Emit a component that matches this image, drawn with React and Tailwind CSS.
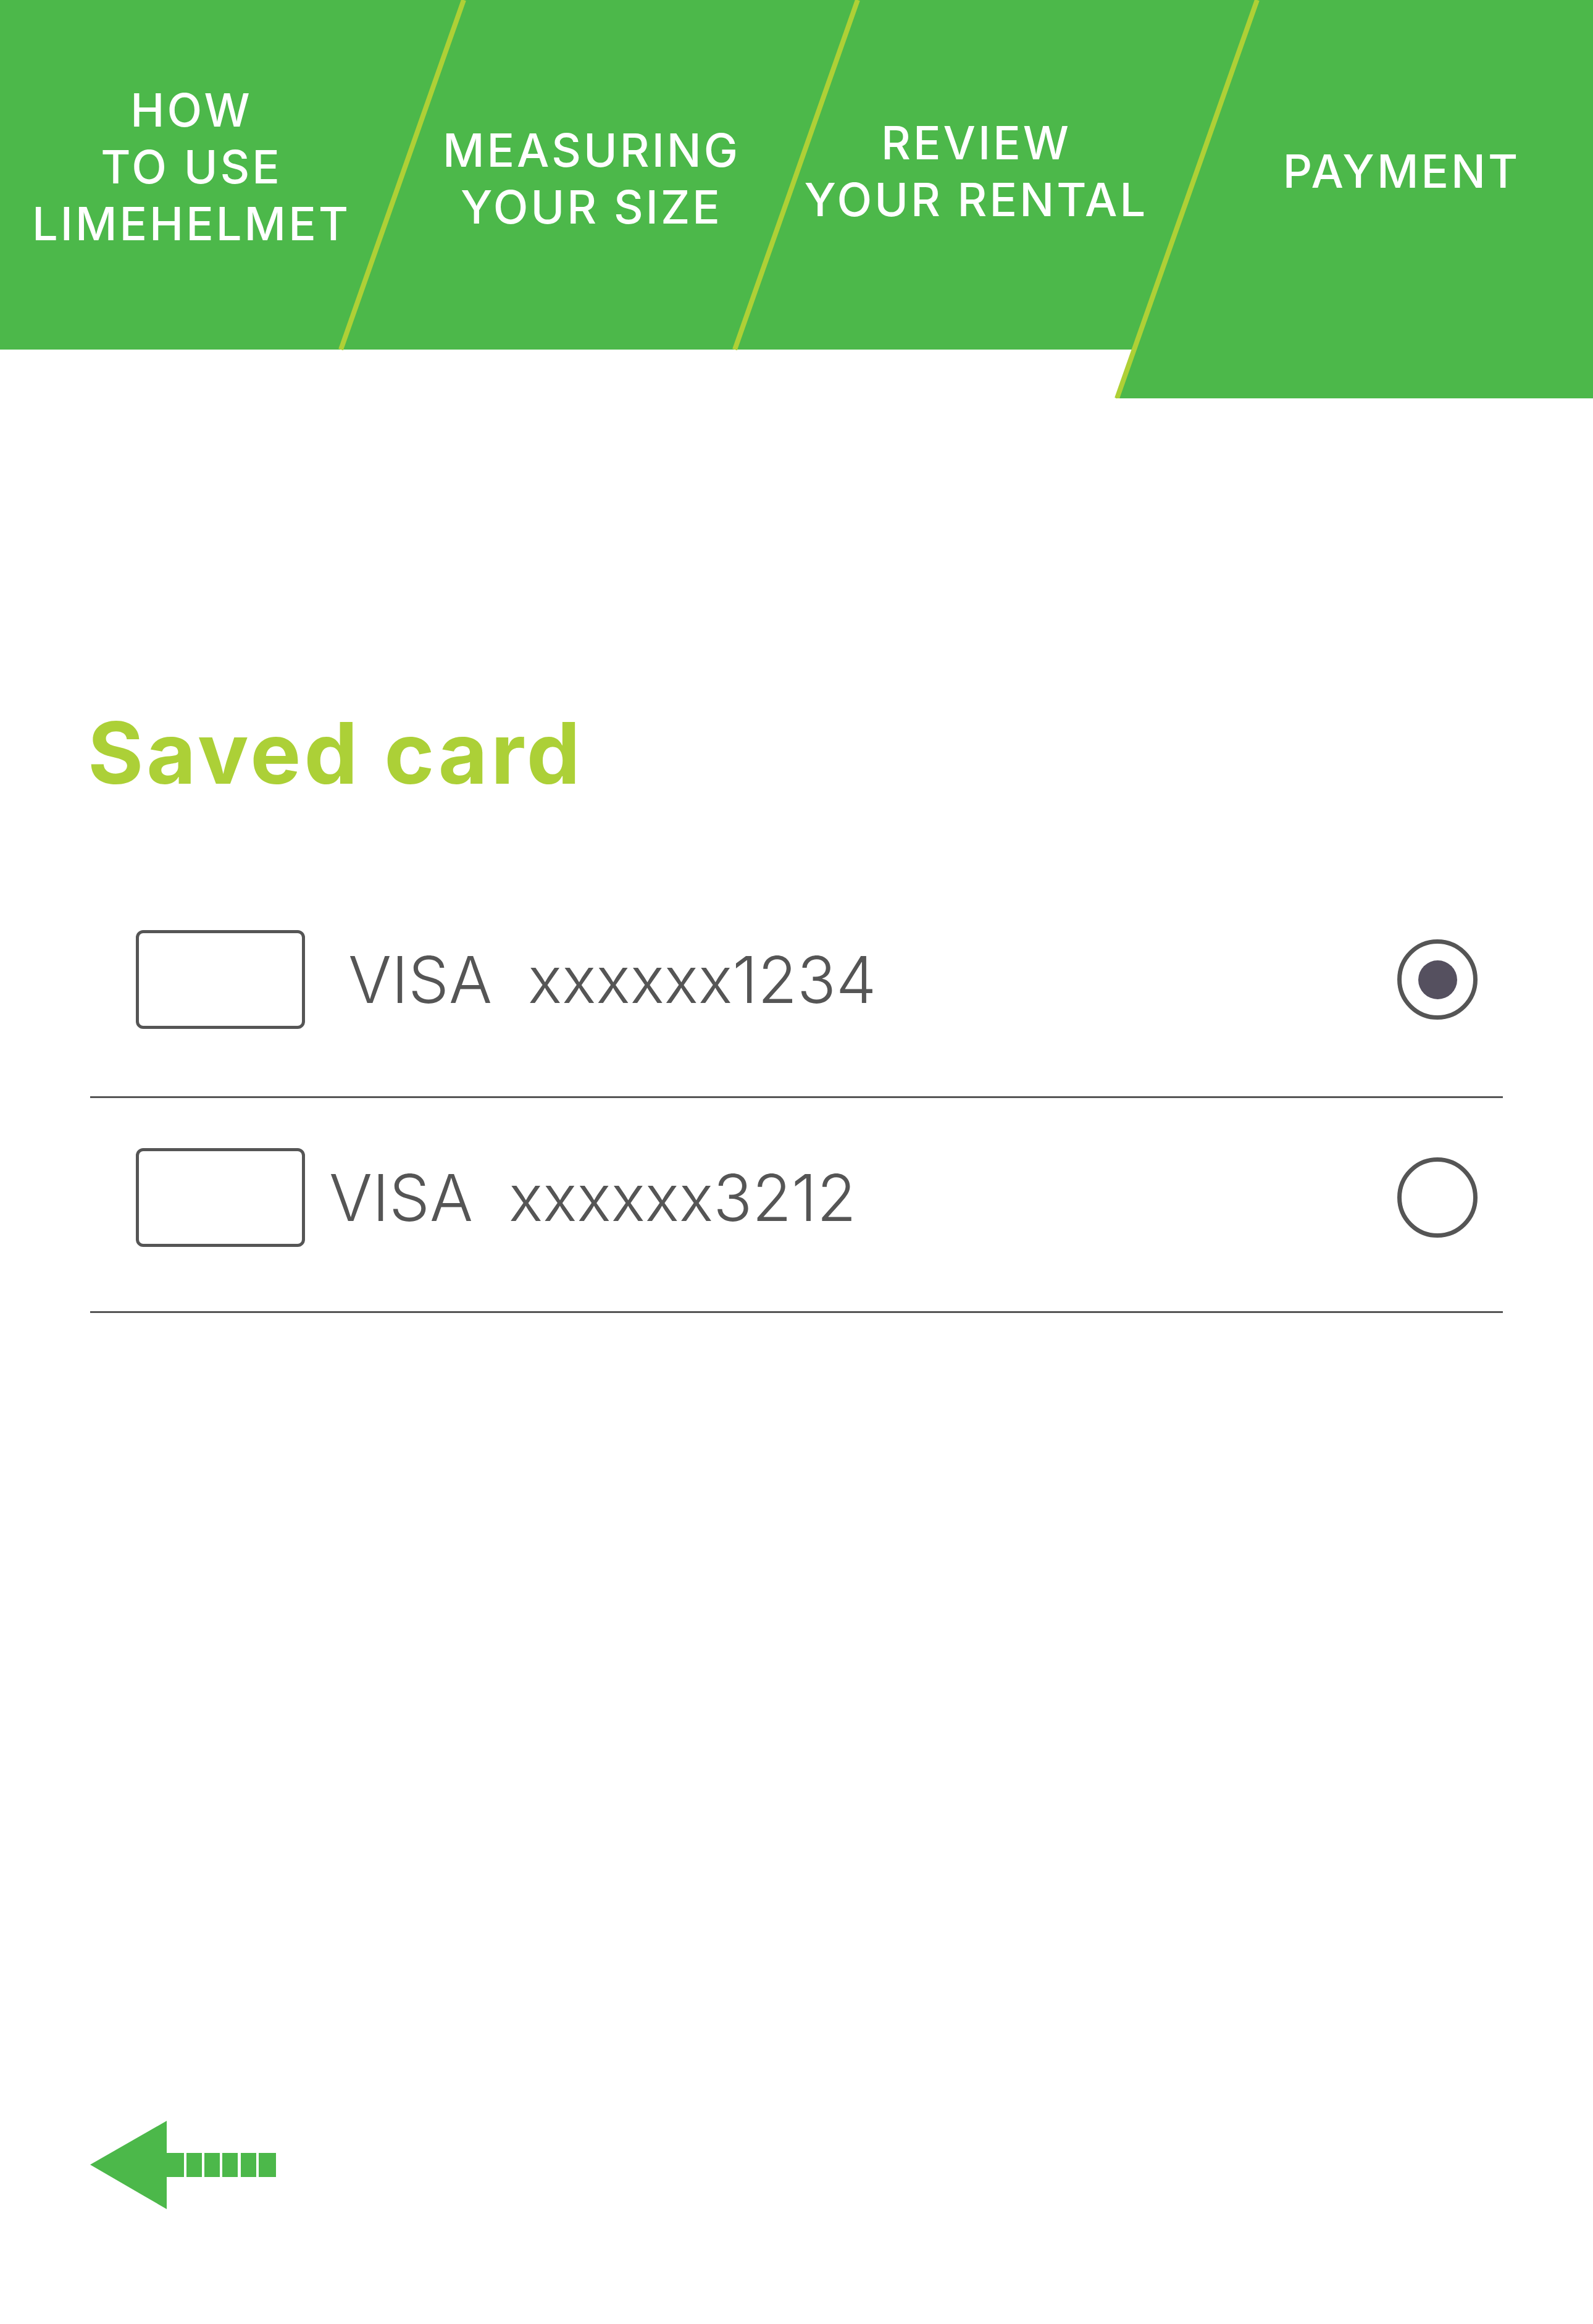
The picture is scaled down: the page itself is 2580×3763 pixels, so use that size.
import React from 'react';

const steps = [
  { lines: ['HOW', 'TO USE', 'LIMEHELMET'], className: 'w-[620px] pt-[132px]' },
  { lines: ['MEASURING', 'YOUR SIZE'], className: 'w-[676px] pt-[197px]' },
  { lines: ['REVIEW', 'YOUR RENTAL'], className: 'w-[570px] pt-[185px]' },
  { lines: ['PAYMENT'], className: 'flex-1 pl-[94px] pt-[231px]' },
];

const cards = [
  { number: 'xxxxxx1234', selected: true, textGap: 'ml-[70px]', rowClass: 'mt-[137px] h-[353px]' },
  { number: 'xxxxxx3212', selected: false, textGap: 'ml-[39px]', rowClass: 'h-[348px]' },
];

const HeaderShape = () => (
  <svg
    className="absolute inset-0"
    width="2580"
    height="645"
    viewBox="0 0 2580 645"
  >
    <rect x="0" y="0" width="2580" height="566" fill="#4cb84a" />
    <polygon points="1835,566 2580,566 2580,645 1807,645" fill="#4cb84a" />
    <line x1="751" y1="0" x2="552" y2="566" stroke="#aed036" strokeWidth="8" />
    <line x1="1389" y1="0" x2="1190" y2="566" stroke="#aed036" strokeWidth="8" />
    <line x1="2036" y1="0" x2="1809" y2="645" stroke="#aed036" strokeWidth="8" />
  </svg>
);

const Radio = ({ selected }) => (
  <div className="ml-auto mr-[41px] flex h-[130px] w-[130px] items-center justify-center rounded-full border-[7px] border-[#555555]">
    {selected && <div className="h-[63px] w-[63px] rounded-full bg-[#55505f]" />}
  </div>
);

const CardRow = ({ number, selected, textGap, rowClass }) => (
  <div className={`flex items-start border-b-[3px] border-[#555555] ${rowClass}`}>
    <div className="flex h-[322px] w-full items-center">
      <div className="ml-[74px] h-[160px] w-[274px] rounded-[12px] border-[5px] border-[#555555]" />
      <div className={`${textGap} flex items-baseline text-[104px] font-light leading-none text-[#555555]`}>
        <span>VISA</span>
        <span className="ml-[58px]">{number}</span>
      </div>
      <Radio selected={selected} />
    </div>
  </div>
);

const BackArrow = () => (
  <svg width="302" height="143" viewBox="146 3432 302 143">
    <polygon points="146,3503 270,3432 270,3575" fill="#4cb84a" />
    <rect x="269" y="3484" width="29" height="39" fill="#4cb84a" />
    <rect x="302" y="3484" width="25" height="39" fill="#4cb84a" />
    <rect x="331" y="3484" width="25" height="39" fill="#4cb84a" />
    <rect x="360" y="3484" width="25" height="39" fill="#4cb84a" />
    <rect x="390" y="3484" width="25" height="39" fill="#4cb84a" />
    <rect x="419" y="3484" width="28" height="39" fill="#4cb84a" />
  </svg>
);

export default function App() {
  return (
    <div className="min-h-[3763px] w-[2580px] bg-white font-['Inter','Liberation_Sans',sans-serif]">
      {/* Step header */}
      <div className="relative h-[645px]">
        <HeaderShape />
        <div className="relative flex h-full">
          {steps.map((step) => (
            <div
              key={step.lines[0]}
              className={`${step.className} text-center text-[74px] font-medium leading-[92px] tracking-[4px] text-white`}
            >
              {step.lines.map((line) => (
                <div key={line}>{line}</div>
              ))}
            </div>
          ))}
        </div>
      </div>

      {/* Saved cards */}
      <div className="px-[146px]">
        <h1 className="-ml-[4px] mt-[505px] text-[138px] font-bold leading-none tracking-[5px] text-[#acd037]">
          Saved card
        </h1>
        {cards.map((card) => (
          <CardRow key={card.number} {...card} />
        ))}
        <div className="mt-[1308px]">
          <BackArrow />
        </div>
      </div>
    </div>
  );
}
